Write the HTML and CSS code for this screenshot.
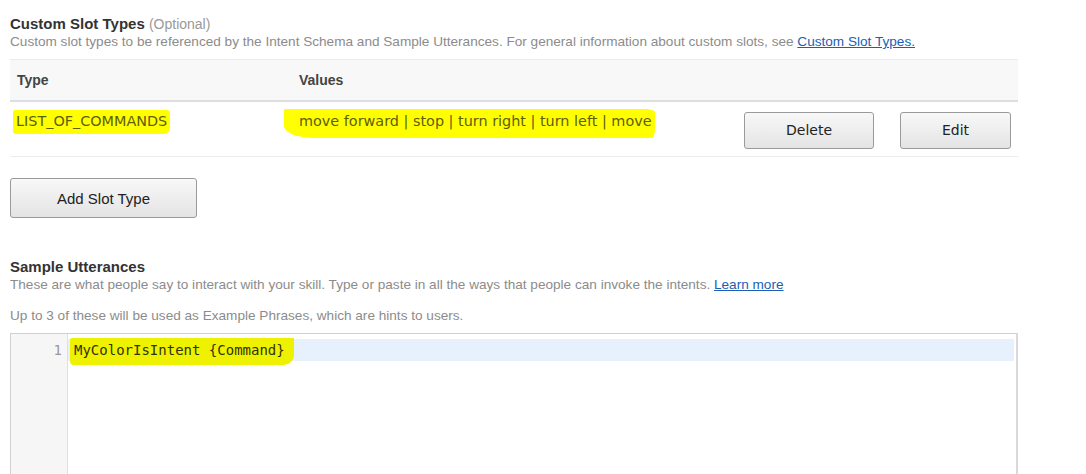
FILE: index.html
```html
<!DOCTYPE html>
<html>
<head>
<meta charset="utf-8">
<link rel="stylesheet" href="styles.css">
</head>
<body>
<div class="page">
  <section class="section">
    <h2 class="title">Custom Slot Types <span class="optional">(Optional)</span></h2>
    <p class="desc">Custom slot types to be referenced by the Intent Schema and Sample Utterances. For general information about custom slots, see <a href="#" class="link">Custom Slot Types.</a></p>
    <div class="table">
      <div class="thead">
        <div class="col-type">Type</div>
        <div class="col-values">Values</div>
      </div>
      <div class="trow">
        <div class="col-type"><span class="hl hl-type">LIST_OF_COMMANDS</span></div>
        <div class="col-values"><span class="hl hl-values">move forward | stop | turn right | turn left | move</span></div>
        <div class="actions">
          <button class="btn btn-delete">Delete</button>
          <button class="btn btn-edit">Edit</button>
        </div>
      </div>
    </div>
    <button class="btn btn-add">Add Slot Type</button>
  </section>

  <section class="section utter">
    <h2 class="title">Sample Utterances</h2>
    <p class="desc">These are what people say to interact with your skill. Type or paste in all the ways that people can invoke the intents. <a href="#" class="link">Learn more</a></p>
    <p class="desc desc2">Up to 3 of these will be used as Example Phrases, which are hints to users.</p>
    <div class="editor">
      <div class="gutter"><div class="lnum">1</div></div>
      <div class="code">
        <div class="line active"><span class="hl hl-code">MyColorIsIntent {Command}</span></div>
      </div>
    </div>
  </section>
</div>
</body>
</html>
```
FILE: styles.css
```css
* { box-sizing: border-box; }
html, body { margin: 0; padding: 0; background: #fff; }
body { font-family: "Liberation Sans", Arial, sans-serif; color: #333; }
.page { padding: 0 0 0 10px; width: 1018px; }

.title {
  margin: 0;
  padding-top: 15px;
  font-size: 15px;
  line-height: 18px;
  font-weight: bold;
  color: #333;
}
.optional { font-weight: normal; color: #999; font-size: 14px; }
.desc {
  margin: 0;
  font-size: 13.6px;
  line-height: 17px;
  color: #8c8c8c;
}
.link { color: #1a5fb4; text-decoration: underline; }

.table { margin-top: 9px; border-top: 1px solid #ebebeb; }
.thead {
  display: flex;
  align-items: center;
  height: 42px;
  background: #f8f8f8;
  border-bottom: 2px solid #dedede;
  font-weight: bold;
  font-size: 14px;
  color: #444;
}
.col-type { width: 289px; padding-left: 7px; flex: none; }
.col-values { flex: 1; }
.trow {
  display: flex;
  align-items: center;
  height: 55px;
  border-bottom: 1px solid #ececec;
  font-family: "DejaVu Sans", Verdana, sans-serif;
  font-size: 14.4px;
}
.trow .col-type { padding-left: 3px; align-self: flex-start; padding-top: 8px; }
.trow .col-values { align-self: flex-start; padding-top: 7px; margin-left: -15px; }
.actions { display: flex; gap: 26px; padding-right: 7px; padding-top: 2px; }

.hl { background: #ffff00; color: #5e5e0a; display: inline-block; }
.hl-type { padding: 3px 3px 5px 3px; border-radius: 2px 3px 6px 3px; }
.hl-values { padding: 4px 3px 9px 15px; border-radius: 1px 10px 3px 30px / 1px 3px 10px 12px; }

.btn {
  font-family: "DejaVu Sans", Verdana, sans-serif;
  font-size: 14px;
  color: #222;
  height: 37px;
  border: 1px solid #9a9a9a;
  border-radius: 3px;
  background: linear-gradient(#f8f8f8, #e4e4e4);
  cursor: pointer;
}
.btn-delete { width: 130px; }
.btn-edit { width: 111px; }
.btn-add {
  margin-top: 21px;
  width: 187px;
  height: 40px;
  font-family: "Liberation Sans", Arial, sans-serif;
  font-size: 15px;
}

.utter { margin-top: 40px; }
.utter .title { padding-top: 0; }
.desc2 { margin-top: 14px; }

.editor {
  margin-top: 9px;
  display: flex;
  height: 150px;
  border: 1px solid #d0d0d0;
  border-right: 2px solid #dadada;
  border-bottom: none;
}
.gutter {
  width: 57px;
  background: #f6f6f6;
  border-right: 1px solid #e0e0e0;
  padding-top: 5px;
  flex: none;
}
.lnum {
  height: 22px;
  line-height: 22px;
  text-align: right;
  padding-right: 5px;
  font-family: "DejaVu Sans Mono", monospace;
  font-size: 14px;
  color: #999;
}
.code { flex: 1; padding-top: 5px; }
.line {
  height: 22px;
  line-height: 22px;
  padding-left: 2px;
  font-family: "DejaVu Sans Mono", monospace;
  font-size: 14px;
  color: #222;
}
.line.active { background: #e7f1fd; margin-right: 2px; }
.hl-code { background: #eef200; color: #333300; padding: 0 9px 3px 4px; margin-top: -2px; border-radius: 2px 0 10px 4px; line-height: 24px; }
```
